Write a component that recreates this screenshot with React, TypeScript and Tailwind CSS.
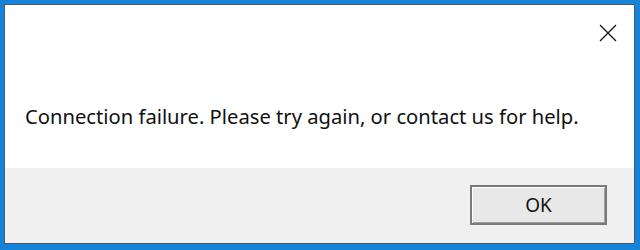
import React from 'react';

const CloseIcon = () => (
  <svg width="18" height="18" viewBox="0 0 18 18" fill="none">
    <path d="M1 1 L17 17 M17 1 L1 17" stroke="#1a1a1a" strokeWidth="1.4" />
  </svg>
);

const App = () => {
  return (
    <div className="w-[640px] h-[250px] bg-[#1584d8] pt-[4px] pl-[4px] pr-[5px] pb-[6px] font-['Noto_Sans',sans-serif]">
      <div className="h-full flex flex-col border border-[#4a5a68] bg-white">
        <div className="flex justify-end pt-[14px] pr-[12px] h-[50px]">
          <button className="w-[28px] h-[28px] flex items-center justify-center">
            <CloseIcon />
          </button>
        </div>
        <div className="flex-1 pl-[20px] pt-[51px] text-[20.2px] text-[#111] leading-none">
          Connection failure. Please try again, or contact us for help.
        </div>
        <div className="h-[75px] bg-[#f0f0f0] flex justify-end items-start pt-[17px] pr-[27px]">
          <button className="w-[137px] h-[40px] border-2 border-[#7a7a7a] bg-[#e8e8e8] text-[19px] text-[#111] shadow-[inset_1px_1px_0_#fff,inset_-1px_-1px_0_#a0a0a0]">
            OK
          </button>
        </div>
      </div>
    </div>
  );
};

export default App;
